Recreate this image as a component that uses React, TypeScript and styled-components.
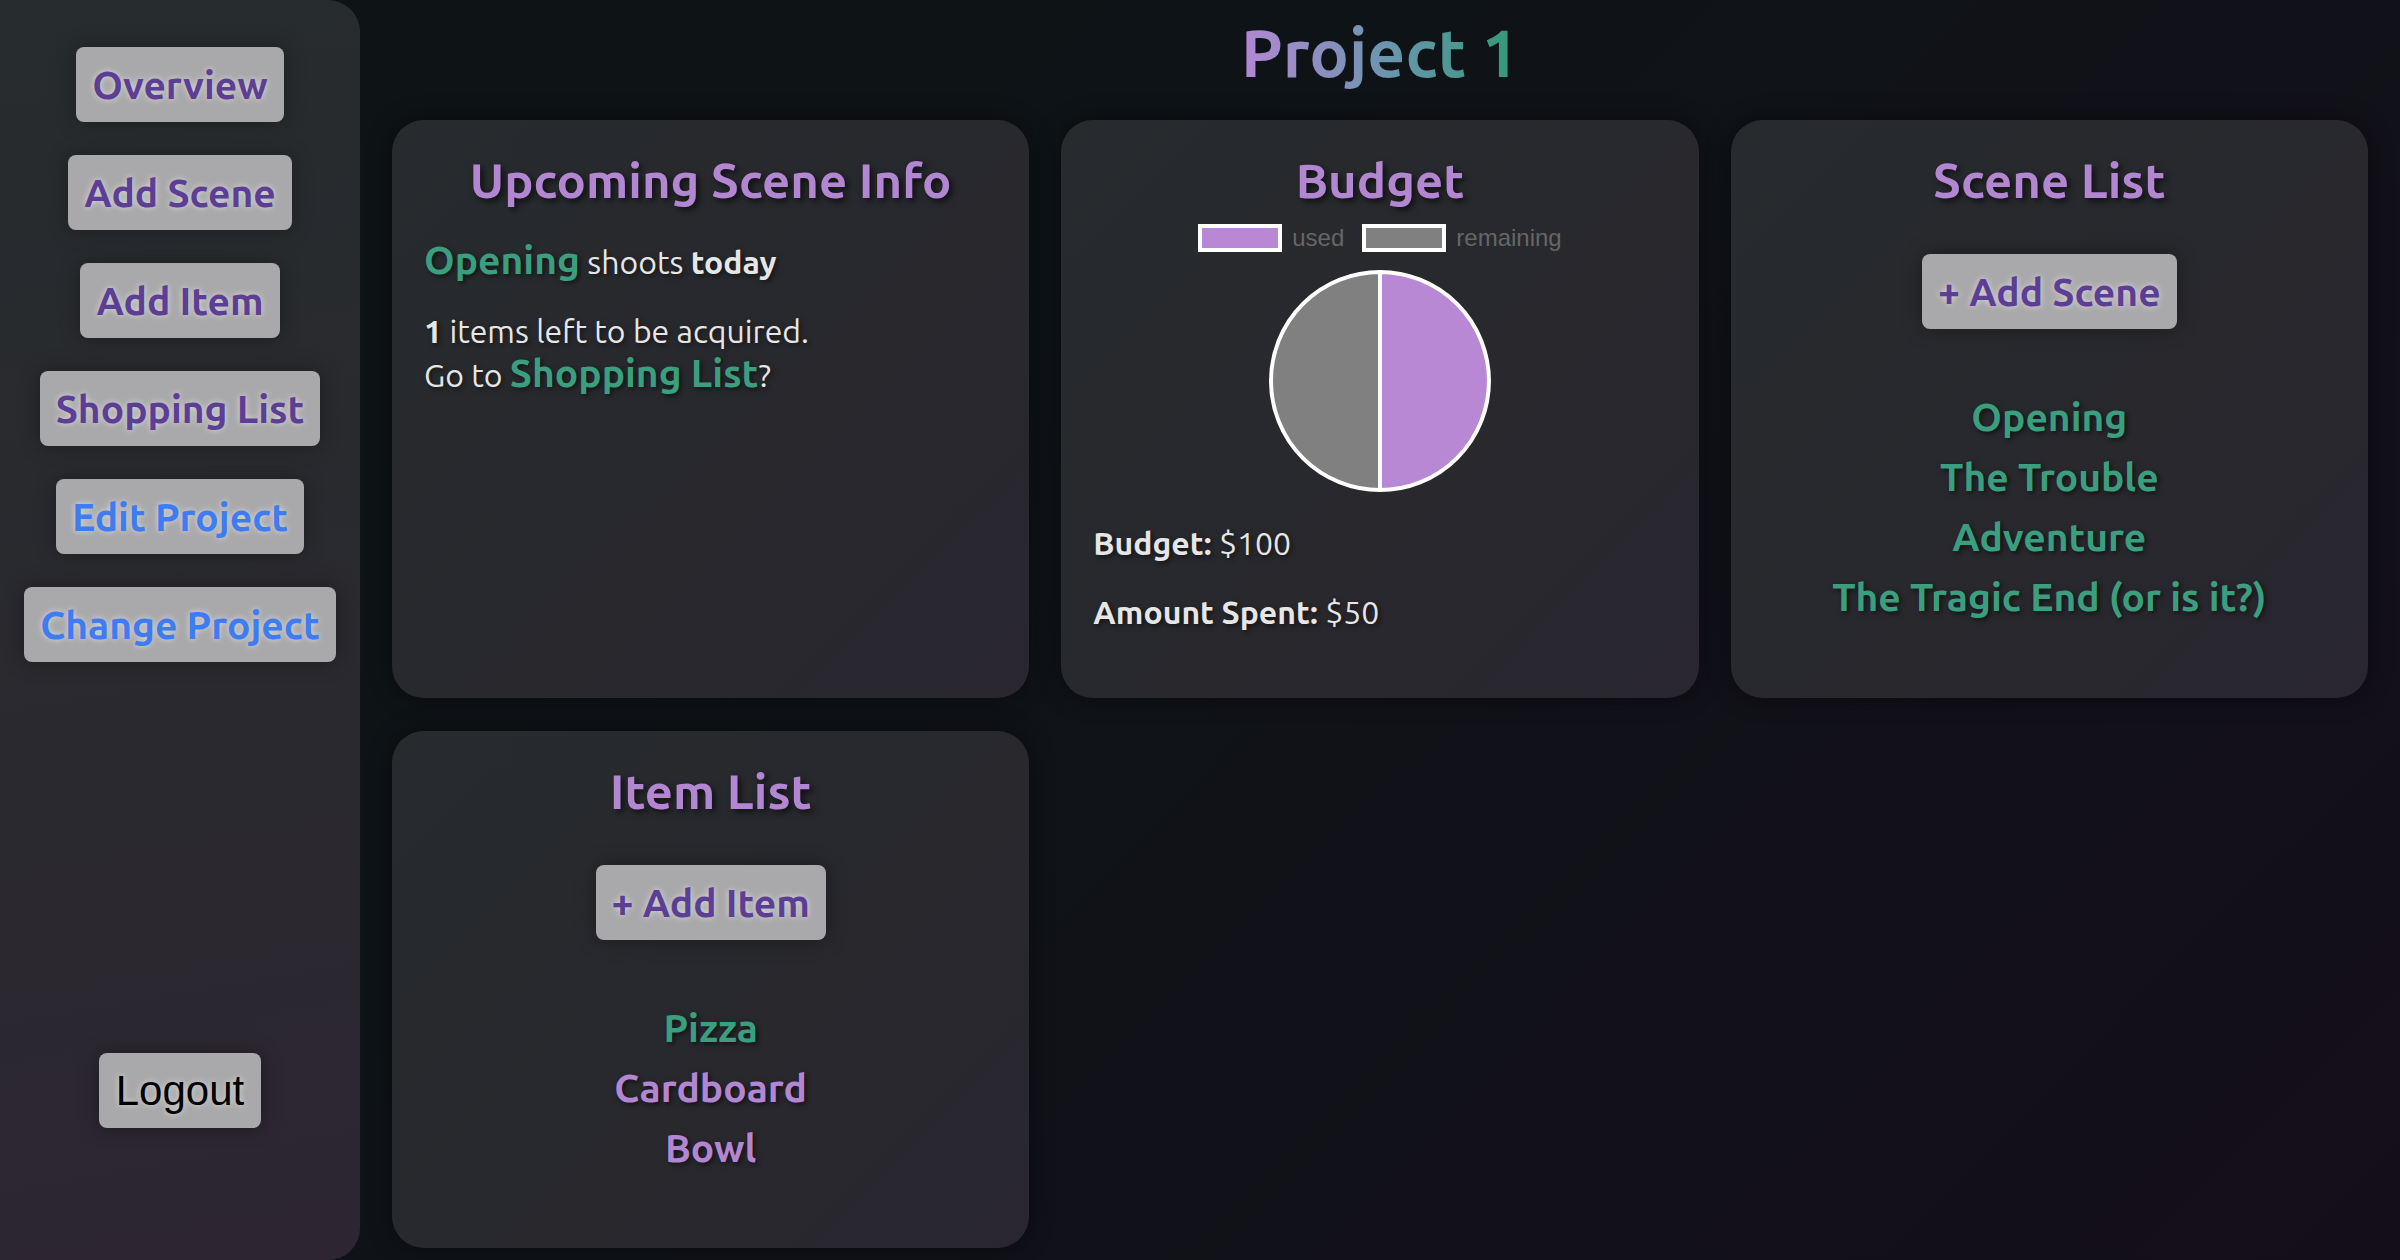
import React from 'react';
import styled, { createGlobalStyle } from 'styled-components';

const GlobalStyle = createGlobalStyle`
  html, body {
    margin: 0;
    padding: 0;
  }
  body {
    background: #0e1315;
    font-family: Ubuntu, Lato, 'Open Sans', sans-serif;
    color: #e6e6e6;
  }
`;

const GREEN = '#3b9e7e';
const PURPLE = '#b386d2';

const Page = styled.div`
  display: flex;
  width: 2400px;
  height: 1260px;
  overflow: hidden;
  background: linear-gradient(135deg, #0e1315 0%, #0f1317 45%, #140e1a 100%);
`;

const Sidebar = styled.nav`
  width: 360px;
  flex-shrink: 0;
  box-sizing: border-box;
  display: flex;
  flex-direction: column;
  align-items: center;
  gap: 33px;
  padding: 47px 0 132px;
  border-radius: 0 32px 32px 0;
  background: linear-gradient(170deg, #272c2e 0%, #2a2a2f 50%, #2d2631 100%);
`;

const NavButton = styled.button<{ $accent?: boolean }>`
  height: 75px;
  padding: 0 16px;
  border: none;
  border-radius: 8px;
  background: #a9a9ab;
  color: ${(p) => (p.$accent ? '#3f7cf1' : '#5c3f95')};
  font-family: inherit;
  font-weight: 700;
  font-size: 39px;
  text-shadow: 0 0 6px rgba(255, 255, 255, 0.6);
  box-shadow: 0 0 20px rgba(0, 0, 0, 0.35);
  cursor: pointer;
`;

const LogoutButton = styled(NavButton)`
  margin-top: auto;
  padding: 0 17px;
  font-family: 'Liberation Sans', Arial, sans-serif;
  font-weight: 400;
  font-size: 42px;
  color: #000;
`;

const Main = styled.main`
  flex: 1;
  display: flex;
  flex-direction: column;
  padding: 0 32px;
`;

const Title = styled.h1`
  margin: 0;
  height: 120px;
  box-sizing: border-box;
  padding-top: 19px;
  text-align: center;
  font-size: 66px;
  line-height: 66px;
  font-weight: 700;
  span {
    background: linear-gradient(90deg, #b487d4 0%, #6f95b0 50%, #2f9a78 100%);
    -webkit-background-clip: text;
    background-clip: text;
    color: transparent;
  }
`;

const Grid = styled.div`
  display: grid;
  grid-template-columns: repeat(3, 1fr);
  grid-template-rows: 578px 517px;
  gap: 33px 32px;
`;

const Card = styled.section`
  box-sizing: border-box;
  display: flex;
  flex-direction: column;
  padding: 32px;
  border-radius: 32px;
  background: linear-gradient(135deg, #272b2e 0%, #28282d 60%, #29262f 100%);
  box-shadow: 0 0 24px rgba(0, 0, 0, 0.45);
  text-shadow: 2px 2px 5px rgba(0, 0, 0, 0.55);
`;

const CardTitle = styled.h2`
  margin: 0;
  text-align: center;
  font-size: 49px;
  line-height: 55px;
  font-weight: 700;
  color: ${PURPLE};
  text-shadow: 3px 3px 6px rgba(0, 0, 0, 0.65);
`;

const Text = styled.p`
  margin: 0;
  font-size: 32px;
  line-height: 37px;
`;

const InfoLine = styled(Text)`
  margin-top: 30px;
  line-height: 46px;
`;

const ItemsLine = styled(Text)`
  margin-top: 25px;
  line-height: 42px;
`;

const Highlight = styled.span`
  font-size: 39px;
  font-weight: 700;
  color: ${GREEN};
`;

const Legend = styled.div`
  display: flex;
  justify-content: center;
  gap: 18px;
  margin-top: 17px;
  font-family: 'Liberation Sans', Arial, sans-serif;
  font-size: 24px;
  color: #666;
  text-shadow: none;
`;

const LegendItem = styled.div`
  display: flex;
  align-items: center;
  gap: 10px;
`;

const LegendBox = styled.span<{ $color: string }>`
  width: 84px;
  height: 28px;
  box-sizing: border-box;
  border: 4px solid #fff;
  background: ${(p) => p.$color};
`;

const PieWrap = styled.div`
  display: flex;
  justify-content: center;
  margin-top: 17px;
`;

const Stat = styled(Text)`
  margin-top: 32px;
  b {
    font-weight: 700;
  }
`;

const CenterList = styled.div`
  display: flex;
  flex-direction: column;
  align-items: center;
`;

const AddButton = styled(NavButton)`
  margin-top: 47px;
  align-self: center;
`;

const ListItem = styled.div<{ $color: string }>`
  font-size: 39px;
  line-height: 60px;
  font-weight: 700;
  color: ${(p) => p.$color};
`;

const ListBlock = styled(CenterList)`
  margin-top: 58px;
`;

const PieChart: React.FC<{ used: number; total: number }> = ({ used, total }) => {
  const r = 109;
  const c = 112;
  const angle = (used / total) * Math.PI * 2;
  const x = c + r * Math.sin(angle);
  const y = c - r * Math.cos(angle);
  const large = angle > Math.PI ? 1 : 0;
  return (
    <svg width="224" height="224" viewBox="0 0 224 224">
      <path
        d={`M${c} ${c} L${c} ${c - r} A${r} ${r} 0 ${1 - large} 0 ${x} ${y} Z`}
        fill="#808080"
        stroke="#fff"
        strokeWidth="4"
      />
      <path
        d={`M${c} ${c} L${c} ${c - r} A${r} ${r} 0 ${large} 1 ${x} ${y} Z`}
        fill="#b888d4"
        stroke="#fff"
        strokeWidth="4"
      />
    </svg>
  );
};

const scenes = ['Opening', 'The Trouble', 'Adventure', 'The Tragic End (or is it?)'];
const items = [
  { name: 'Pizza', acquired: false },
  { name: 'Cardboard', acquired: true },
  { name: 'Bowl', acquired: true },
];

const App: React.FC = () => {
  return (
    <>
      <GlobalStyle />
      <Page>
        <Sidebar>
          <NavButton>Overview</NavButton>
          <NavButton>Add Scene</NavButton>
          <NavButton>Add Item</NavButton>
          <NavButton>Shopping List</NavButton>
          <NavButton $accent>Edit Project</NavButton>
          <NavButton $accent>Change Project</NavButton>
          <LogoutButton>Logout</LogoutButton>
        </Sidebar>
        <Main>
          <Title>
            <span>Project 1</span>
          </Title>
          <Grid>
            <Card>
              <CardTitle>Upcoming Scene Info</CardTitle>
              <InfoLine>
                <Highlight>Opening</Highlight> shoots <b>today</b>
              </InfoLine>
              <ItemsLine>
                <b>1</b> items left to be acquired.
                <br />
                Go to <Highlight>Shopping List</Highlight>?
              </ItemsLine>
            </Card>
            <Card>
              <CardTitle>Budget</CardTitle>
              <Legend>
                <LegendItem>
                  <LegendBox $color="#b888d4" />
                  used
                </LegendItem>
                <LegendItem>
                  <LegendBox $color="#808080" />
                  remaining
                </LegendItem>
              </Legend>
              <PieWrap>
                <PieChart used={50} total={100} />
              </PieWrap>
              <Stat>
                <b>Budget:</b> $100
              </Stat>
              <Stat>
                <b>Amount Spent:</b> $50
              </Stat>
            </Card>
            <Card>
              <CardTitle>Scene List</CardTitle>
              <AddButton>+ Add Scene</AddButton>
              <ListBlock>
                {scenes.map((s) => (
                  <ListItem key={s} $color={GREEN}>
                    {s}
                  </ListItem>
                ))}
              </ListBlock>
            </Card>
            <Card>
              <CardTitle>Item List</CardTitle>
              <AddButton>+ Add Item</AddButton>
              <ListBlock>
                {items.map((it) => (
                  <ListItem key={it.name} $color={it.acquired ? PURPLE : GREEN}>
                    {it.name}
                  </ListItem>
                ))}
              </ListBlock>
            </Card>
          </Grid>
        </Main>
      </Page>
    </>
  );
};

export default App;
